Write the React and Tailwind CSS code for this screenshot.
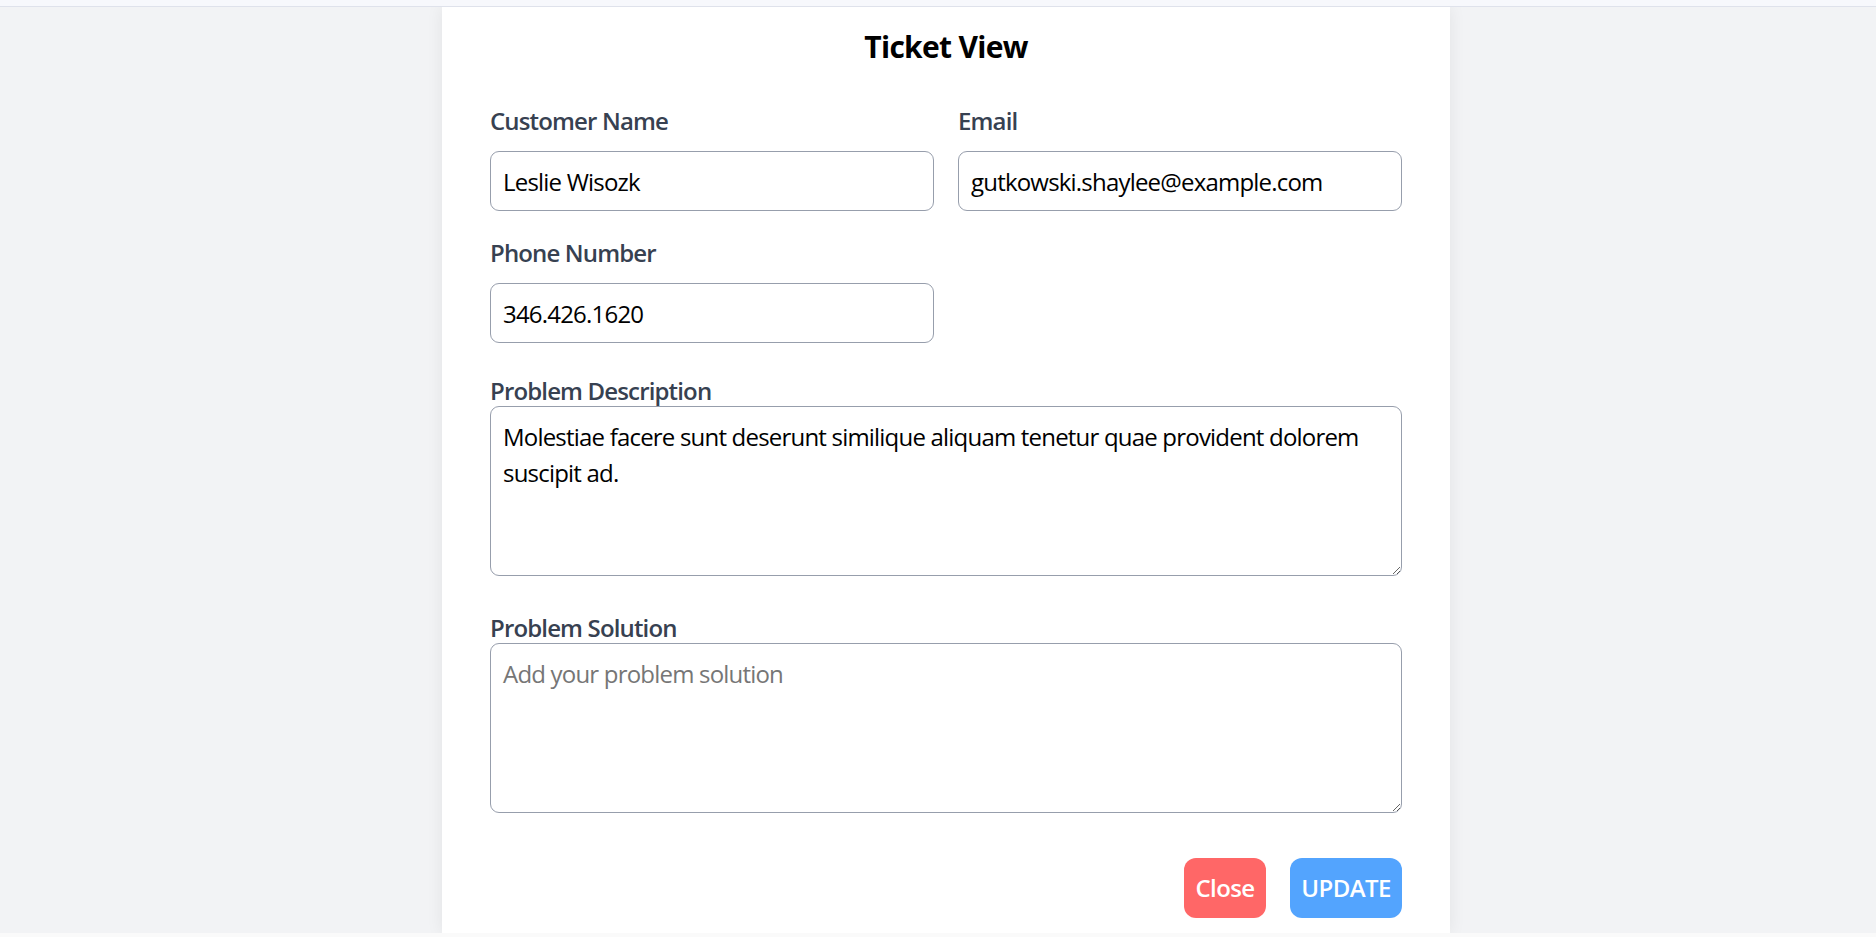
const labelCls = "block text-[24px] font-semibold text-[#374151] tracking-[-0.85px]";
const fieldCls =
  "w-full rounded-[9px] border border-[#979eac] bg-white px-[12px] text-[24px] text-black tracking-[-0.8px] outline-none placeholder:text-[#767676]";

const Field = ({ label, value }) => (
  <div>
    <label className={`${labelCls} leading-[36px] mb-[12px]`}>{label}</label>
    <input className={`${fieldCls} h-[60px]`} defaultValue={value} readOnly />
  </div>
);

const AreaField = ({ label, value, placeholder, className }) => (
  <div className={className}>
    <label className={`${labelCls} leading-[30px]`}>{label}</label>
    <textarea
      className={`${fieldCls} block h-[170px] pt-[12px] leading-[36px]`}
      defaultValue={value}
      placeholder={placeholder}
    />
  </div>
);

export default function App() {
  return (
    <div className="flex h-[937px] flex-col bg-[#f2f3f5] font-['Open_Sans',sans-serif]">
      {/* top bar, mostly scrolled away */}
      <div className="h-[7px] shrink-0 border-b border-[#dfe2eb] bg-[#f7f8fc]" />

      <main className="flex flex-1 justify-center overflow-hidden pl-[16px]">
        <div className="w-[1008px] bg-white px-[48px] pt-[19px] pb-[14px] shadow-[0_0_16px_rgba(0,0,0,0.07)]">
          <h1 className="text-center text-[30px] font-bold leading-[42px] text-black tracking-[-0.7px]">Ticket View</h1>

          <div className="mt-[35px] grid grid-cols-2 gap-x-[24px] gap-y-[24px]">
            <Field label="Customer Name" value="Leslie Wisozk" />
            <Field label="Email" value="gutkowski.shaylee@example.com" />
            <Field label="Phone Number" value="346.426.1620" />
          </div>

          <AreaField
            className="mt-[33px]"
            label="Problem Description"
            value="Molestiae facere sunt deserunt similique aliquam tenetur quae provident dolorem suscipit ad."
          />
          <AreaField className="mt-[37px]" label="Problem Solution" placeholder="Add your problem solution" />

          <div className="mt-[45px] flex justify-end gap-[24px]">
            <button className="h-[60px] w-[82px] rounded-[12px] bg-[#ff6767] text-[24px] font-semibold text-white tracking-[-0.6px]">
              Close
            </button>
            <button className="h-[60px] w-[112px] rounded-[12px] bg-[#53a4fe] text-[24px] font-semibold text-white tracking-[-0.6px]">
              UPDATE
            </button>
          </div>
        </div>
      </main>

      <div className="h-[4px] shrink-0 bg-[#fafafa]" />
    </div>
  );
}
